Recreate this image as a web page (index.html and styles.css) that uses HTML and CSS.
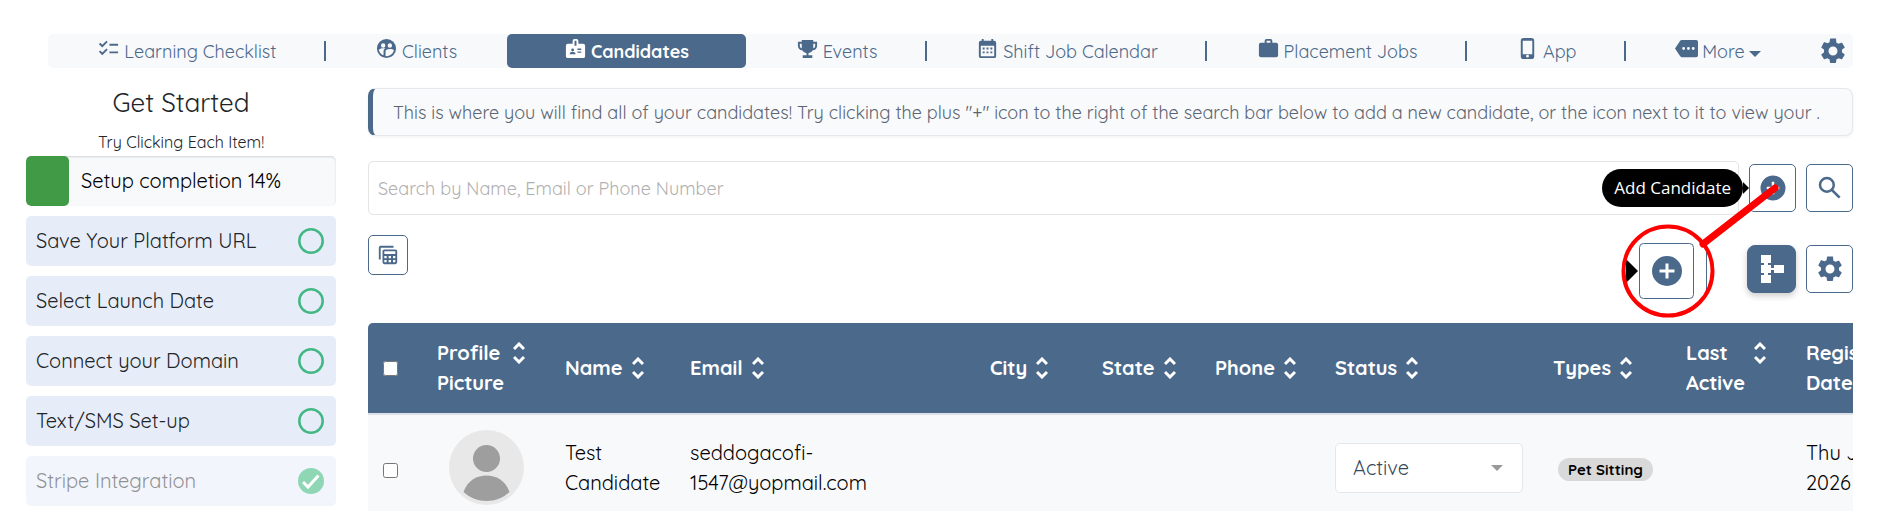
FILE: index.html
```html
<!DOCTYPE html>
<html lang="en">
<head>
  <meta charset="utf-8">
  <title>Candidates</title>
  <link rel="stylesheet" href="styles.css">
</head>
<body>
  <!-- Shared icons -->
  <svg class="sprite" aria-hidden="true">
    <symbol id="gear" viewBox="0 0 24 24"><path d="M19.14 12.94c.04-.3.06-.61.06-.94s-.02-.64-.07-.94l2.03-1.58a.49.49 0 0 0 .12-.61l-1.92-3.32a.49.49 0 0 0-.59-.22l-2.39.96a7 7 0 0 0-1.62-.94l-.36-2.54A.48.48 0 0 0 13.92 2h-3.84c-.24 0-.43.17-.47.41l-.36 2.54c-.59.24-1.13.57-1.62.94l-2.39-.96a.48.48 0 0 0-.59.22L2.74 8.87a.48.48 0 0 0 .12.61l2.03 1.58c-.05.3-.09.63-.09.94s.02.64.07.94l-2.03 1.58a.49.49 0 0 0-.12.61l1.92 3.32c.12.22.37.29.59.22l2.39-.96c.5.38 1.03.7 1.62.94l.36 2.54c.05.24.24.41.48.41h3.84c.24 0 .44-.17.47-.41l.36-2.54c.59-.24 1.13-.56 1.62-.94l2.39.96c.22.08.47 0 .59-.22l1.92-3.32a.48.48 0 0 0-.12-.61zM12 15.6a3.6 3.6 0 1 1 0-7.2 3.6 3.6 0 0 1 0 7.2z"/></symbol>
    <symbol id="plus" viewBox="0 0 24 24"><path d="M12 2a10 10 0 1 0 0 20 10 10 0 0 0 0-20zm5 11h-4v4h-2v-4H7v-2h4V7h2v4h4z"/></symbol>
    <symbol id="sort" viewBox="0 0 12 22"><path d="M1 7 6 2l5 5M1 15l5 5 5-5" fill="none" stroke="currentColor" stroke-width="3"/></symbol>
    <symbol id="ring" viewBox="0 0 26 26"><circle cx="13" cy="13" r="11.700" fill="none" stroke="#41b883" stroke-width="2.500"/></symbol>
  </svg>

  <nav class="navbar">
    <a class="nav-item divided" href="#">
      <svg class="icon" viewBox="0 0 24 24"><path d="M22 7h-9v2h9V7zm0 8h-9v2h9v-2zM5.540 11 2 7.460l1.410-1.410 2.120 2.120 4.240-4.240 1.410 1.410L5.540 11zm0 8L2 15.460l1.410-1.410 2.120 2.120 4.240-4.240 1.410 1.410L5.540 19z"/></svg>
      <span>Learning Checklist</span>
    </a>
    <a class="nav-item" href="#">
      <svg class="icon" viewBox="0 0 24 24"><path fill-rule="evenodd" d="M12 2a10 10 0 1 0 0 20 10 10 0 0 0 0-20zM8.500 6.500a2.300 2.300 0 1 1 0 4.600 2.300 2.300 0 0 1 0-4.600zm7 0a2.300 2.300 0 1 1 0 4.600 2.300 2.300 0 0 1 0-4.600zM4 13.500c.5-1.200 2.500-1.700 4.500-1.700.8 0 1.600.1 2.400.3-1.500.8-2 1.700-2 2.800v4.200A8 8 0 0 1 4 13.500zm7 6.400v-5c0-1.600 2.600-2.500 4.500-2.500 1.700 0 3.700.500 4.300 1.500A8 8 0 0 1 11 19.900z"/></svg>
      <span>Clients</span>
    </a>
    <a class="nav-item active" href="#">
      <svg class="icon" viewBox="0 0 24 24"><path fill-rule="evenodd" d="M20 7h-5V4a2 2 0 0 0-2-2h-2a2 2 0 0 0-2 2v3H4a2 2 0 0 0-2 2v11c0 1.100.9 2 2 2h16a2 2 0 0 0 2-2V9a2 2 0 0 0-2-2zM9 12a1.500 1.500 0 1 1 0 3 1.500 1.500 0 0 1 0-3zm3 6H6v-.750c0-1 2-1.500 3-1.500s3 .500 3 1.500zm1-9h-2V4h2zm5 7.500h-4V15h4zm0-3h-4V12h4z"/></svg>
      <span>Candidates</span>
    </a>
    <a class="nav-item divided" href="#">
      <svg class="icon" viewBox="0 0 24 24"><path fill-rule="evenodd" d="M18 5V3H6v2H2v4c0 2.600 1.900 4.600 4.400 4.900A6 6 0 0 0 11 16.900V19H7v3h10v-3h-4v-2.100a6 6 0 0 0 4.600-3C20.100 13.600 22 11.600 22 9V5zM4 9V7h2v4.800C4.800 11.400 4 10.300 4 9zm16 0c0 1.300-.8 2.400-2 2.800V7h2z"/></svg>
      <span>Events</span>
    </a>
    <a class="nav-item divided" href="#">
      <svg class="icon" viewBox="0 0 24 24"><path fill-rule="evenodd" d="M19 4h-1V2h-2v2H8V2H6v2H5a2 2 0 0 0-2 2v14c0 1.100.9 2 2 2h14a2 2 0 0 0 2-2V6a2 2 0 0 0-2-2zm0 16H5V9h14zM7 11h2v2H7zm4 0h2v2h-2zm4 0h2v2h-2zm-8 4h2v2H7zm4 0h2v2h-2zm4 0h2v2h-2z"/></svg>
      <span>Shift Job Calendar</span>
    </a>
    <a class="nav-item divided" href="#">
      <svg class="icon" viewBox="0 0 24 24"><path fill-rule="evenodd" d="M20 6h-4V4a2 2 0 0 0-2-2h-4a2 2 0 0 0-2 2v2H4a2 2 0 0 0-2 2v11c0 1.100.9 2 2 2h16a2 2 0 0 0 2-2V8a2 2 0 0 0-2-2zm-6 0h-4V4h4z"/></svg>
      <span>Placement Jobs</span>
    </a>
    <a class="nav-item divided" href="#">
      <svg class="icon" viewBox="0 0 24 24"><path fill-rule="evenodd" d="M16 1H8a3 3 0 0 0-3 3v16a3 3 0 0 0 3 3h8a3 3 0 0 0 3-3V4a3 3 0 0 0-3-3zm-4 20.500a1.500 1.500 0 1 1 0-3 1.500 1.500 0 0 1 0 3zM17 18H7V4h10z"/></svg>
      <span>App</span>
    </a>
    <a class="nav-item" href="#">
      <svg class="icon" viewBox="0 0 24 24"><path fill-rule="evenodd" d="M22 3H7c-.7 0-1.200.3-1.600.9L0 12l5.400 8.100c.4.500.9.900 1.600.900h15a2 2 0 0 0 2-2V5a2 2 0 0 0-2-2zM9 13.500a1.500 1.500 0 1 1 0-3 1.500 1.500 0 0 1 0 3zm5 0a1.500 1.500 0 1 1 0-3 1.500 1.500 0 0 1 0 3zm5 0a1.500 1.500 0 1 1 0-3 1.500 1.500 0 0 1 0 3z"/></svg>
      <span>More</span>
      <span class="caret"></span>
    </a>
    <a class="nav-settings" href="#" aria-label="Settings"><svg><use href="#gear"/></svg></a>
  </nav>

  <div class="layout">
    <aside class="sidebar">
      <h2>Get Started</h2>
      <p>Try Clicking Each Item!</p>
      <div class="progress">
        <div class="progress-bar" style="width: 14%"></div>
        <span class="progress-label">Setup completion 14%</span>
      </div>
      <a class="step" href="#">Save Your Platform URL <svg><use href="#ring"/></svg></a>
      <a class="step" href="#">Select Launch Date <svg><use href="#ring"/></svg></a>
      <a class="step" href="#">Connect your Domain <svg><use href="#ring"/></svg></a>
      <a class="step" href="#">Text/SMS Set-up <svg><use href="#ring"/></svg></a>
      <a class="step done" href="#">Stripe Integration
        <svg viewBox="0 0 26 26"><circle cx="13" cy="13" r="13" fill="#1faf6c"/><path d="M5 14l5 5L20.500 7.500" fill="none" stroke="#fff" stroke-width="3"/></svg>
      </a>
    </aside>

    <main class="content">
      <div class="notice">This is where you will find all of your candidates! Try clicking the plus "+" icon to the right of the search bar below to add a new candidate, or the icon next to it to view your .</div>

      <div class="search-row">
        <input class="search" type="text" placeholder="Search by Name, Email or Phone Number" aria-label="Search candidates">
        <div class="add-wrap">
          <button class="icon-btn" type="button" aria-label="Add Candidate"><svg><use href="#plus"/></svg></button>
          <span class="tooltip">Add Candidate</span>
          <!-- Magnified view of the add button -->
          <svg class="callout" viewBox="0 0 160 160" aria-hidden="true">
            <path d="M6 99 18 111 6 123z" fill="#000"/>
            <path d="M86.500 90v42" stroke="#4b698b" stroke-width="1"/>
            <rect x="19.500" y="83.500" width="54" height="55" rx="4" fill="#fff" stroke="#4b698b"/>
            <circle cx="47" cy="111" r="15" fill="#4b698b"/>
            <path d="M39.500 111h15M47 103.500v15" stroke="#fff" stroke-width="3"/>
            <circle cx="48" cy="111" r="44.500" fill="none" stroke="#f00" stroke-width="4"/>
            <path d="M83 84 155 28" stroke="#f00" stroke-width="7" stroke-linecap="round"/>
          </svg>
        </div>
        <button class="icon-btn" type="button" aria-label="Search">
          <svg viewBox="0 0 24 24"><circle cx="9.500" cy="9.500" r="5.500" fill="none" stroke="currentColor" stroke-width="2"/><path d="M13.500 13.500 19.700 19.700" stroke="currentColor" stroke-width="2.200"/></svg>
        </button>
      </div>

      <div class="tool-row">
        <button class="icon-btn small" type="button" aria-label="Table columns">
          <svg viewBox="0 0 24 24"><path fill-rule="evenodd" d="M2 4a2 2 0 0 1 2-2h14v2H4v13H2zM8 6h12a2 2 0 0 1 2 2v12a2 2 0 0 1-2 2H8a2 2 0 0 1-2-2V8c0-1.100.9-2 2-2zm0 2v3h12V8zm0 5v2.500h2.500V13zm4.700 0v2.500h2.600V13zm4.800 0v2.500H20V13zM8 17.500V20h2.500v-2.500zm4.700 0V20h2.600v-2.500zm4.800 0V20H20v-2.500z"/></svg>
        </button>
        <div class="tools">
          <button class="icon-btn primary" type="button" aria-label="Workflow">
            <svg viewBox="0 0 24 28"><path d="M1 0h10v8H8v2h3v3h3v-3h10v8H14v-3h-3v3H8v2h3v8H1v-8h3v-2H1v-8h3V8H1z"/></svg>
          </button>
          <button class="icon-btn" type="button" aria-label="Table settings"><svg><use href="#gear"/></svg></button>
        </div>
      </div>

      <div class="table-wrap">
        <table class="candidates">
          <colgroup>
            <col class="c-check"><col class="c-picture"><col class="c-name"><col class="c-email"><col class="c-city"><col class="c-state"><col class="c-phone"><col class="c-status"><col class="c-types"><col class="c-last"><col class="c-date">
          </colgroup>
          <thead>
            <tr>
              <th><input type="checkbox" aria-label="Select all"></th>
              <th><div class="head"><span>Profile<br>Picture</span><svg><use href="#sort"/></svg></div></th>
              <th><div class="head"><span>Name</span><svg><use href="#sort"/></svg></div></th>
              <th><div class="head"><span>Email</span><svg><use href="#sort"/></svg></div></th>
              <th><div class="head"><span>City</span><svg><use href="#sort"/></svg></div></th>
              <th><div class="head"><span>State</span><svg><use href="#sort"/></svg></div></th>
              <th><div class="head"><span>Phone</span><svg><use href="#sort"/></svg></div></th>
              <th><div class="head"><span>Status</span><svg><use href="#sort"/></svg></div></th>
              <th><div class="head"><span>Types</span><svg><use href="#sort"/></svg></div></th>
              <th><div class="head"><span>Last<br>Active</span><svg><use href="#sort"/></svg></div></th>
              <th><div class="head"><span>Registration<br>Date</span></div></th>
            </tr>
          </thead>
          <tbody>
            <tr>
              <td><input type="checkbox" aria-label="Select Test Candidate"></td>
              <td class="picture">
                <svg viewBox="0 0 75 75"><circle cx="37.500" cy="37.500" r="37.500" fill="#e8e8e8"/><circle cx="37.500" cy="28.500" r="13.500" fill="#9e9e9e"/><path d="M14.500 62C19 50 28 45.500 37.500 45.500S56 50 60.500 62C54 68 46 71 37.500 71S21 68 14.500 62z" fill="#9e9e9e"/></svg>
              </td>
              <td>Test Candidate</td>
              <td>seddogacofi-<br>1547@yopmail.com</td>
              <td></td>
              <td></td>
              <td></td>
              <td>
                <div class="select-wrap">
                  <select aria-label="Status"><option>Active</option><option>Inactive</option></select>
                </div>
              </td>
              <td><span class="badge">Pet Sitting</span></td>
              <td></td>
              <td>Thu Jan 15 2026</td>
            </tr>
          </tbody>
        </table>
      </div>
    </main>
  </div>
</body>
</html>
```
FILE: styles.css
```css
* {
  box-sizing: border-box;
}

body {
  margin: 0;
  height: 100vh;
  overflow: hidden;
  padding: 34px 48px 0 26px;
  background: #fff;
  color: #212529;
  font-family: Quicksand, Lato, sans-serif;
  font-size: 20px;
  line-height: 30px;
}

a {
  color: inherit;
  text-decoration: none;
}

svg {
  fill: currentColor;
  flex: none;
}

button,
input,
select {
  font-family: inherit;
}

.sprite {
  display: none;
}

/* Navigation */
.navbar {
  display: flex;
  height: 34px;
  margin-left: 22px;
  background: #f8f9fb;
  border-radius: 5px;
  color: #4b698b;
  font-size: 18px;
}

.nav-item {
  display: flex;
  flex: 1 1 auto;
  align-items: center;
  justify-content: center;
  gap: 4px;
  position: relative;
  padding-top: 2px;
}

.nav-item.divided::after {
  content: "";
  position: absolute;
  right: 0;
  top: 7px;
  height: 20px;
  border-right: 2px solid #4b698b;
}

.nav-item.active {
  padding: 2px 8px 0;
  background: #4b698b;
  border-radius: 5px;
  color: #fff;
  font-weight: bold;
}

.nav-item .icon {
  width: 23px;
  height: 23px;
  margin-bottom: 7px;
}

.caret {
  border: 6px solid transparent;
  border-top-color: #4b698b;
  border-bottom: 0;
  margin-top: 4px;
}

.nav-settings {
  display: flex;
  align-items: center;
  padding: 0 5px 0 8px;
}

.nav-settings svg {
  width: 30px;
  height: 30px;
}

/* Page columns */
.layout {
  display: grid;
  grid-template-columns: 310px minmax(0, 1fr);
  gap: 32px;
}

/* Get started steps */
.sidebar {
  display: flex;
  flex-direction: column;
  gap: 10px;
  padding-top: 20px;
}

.sidebar h2 {
  margin: 0;
  text-align: center;
  font-size: 26px;
  font-weight: normal;
}

.sidebar p {
  margin: 0 0 -10px;
  text-align: center;
  font-size: 16px;
  line-height: 28px;
}

.progress {
  display: grid;
  height: 50px;
  overflow: hidden;
  background: #f8f9fb;
  border-radius: 5px;
  box-shadow: inset 0 1px 2px rgba(0, 0, 0, 0.15);
  color: #000;
}

.progress-bar,
.progress-label {
  grid-area: 1 / 1;
}

.progress-bar {
  background: #419a45;
  border-radius: 5px;
}

.progress-label {
  place-self: center;
}

.step {
  display: flex;
  align-items: center;
  justify-content: space-between;
  height: 50px;
  padding: 0 12px 0 10px;
  background: #e7edf8;
  border-radius: 5px;
}

.step svg {
  width: 26px;
  height: 26px;
}

.step.done {
  opacity: 0.5;
}

/* Main column */
.content {
  padding-top: 20px;
}

.notice {
  padding: 9px 20px 7px;
  background: #f9fafc;
  border: 1px solid #e5e7eb;
  border-left: 5px solid #4b698b;
  border-radius: 8px;
  box-shadow: 0 1px 3px rgba(0, 0, 0, 0.06);
  color: #5b6472;
  font-size: 18px;
}

.search-row {
  display: flex;
  align-items: center;
  gap: 10px;
  margin-top: 25px;
}

.search {
  flex: 1;
  min-width: 0;
  height: 54px;
  padding: 0 9px;
  border: 1px solid #e4e4e4;
  border-radius: 5px;
  font-size: 18px;
}

.search::placeholder {
  color: #b0b0b0;
}

.icon-btn {
  display: flex;
  align-items: center;
  justify-content: center;
  width: 47px;
  height: 48px;
  padding: 0;
  background: #fff;
  border: 1px solid #4b698b;
  border-radius: 5px;
  color: #4b698b;
}

.icon-btn svg {
  width: 30px;
  height: 30px;
}

.icon-btn.small {
  width: 40px;
  height: 40px;
}

.icon-btn.small svg {
  width: 22px;
  height: 22px;
}

.icon-btn.primary {
  width: 49px;
  background: #4b698b;
  border-radius: 8px;
  box-shadow: 0 3px 6px rgba(0, 0, 0, 0.2);
  color: #fff;
}

.icon-btn.primary svg {
  width: 24px;
  height: 28px;
}

.add-wrap {
  position: relative;
}

.tooltip {
  position: absolute;
  top: 5px;
  right: 53px;
  padding: 0 12px;
  background: #000;
  border-radius: 20px;
  color: #fff;
  font-family: "Open Sans", sans-serif;
  font-size: 17px;
  line-height: 38px;
  white-space: nowrap;
}

.tooltip::after {
  content: "";
  position: absolute;
  left: 100%;
  top: 13px;
  border: 6px solid transparent;
  border-left-color: #000;
  border-right: 0;
}

.callout {
  position: absolute;
  left: -129px;
  top: -4px;
  width: 160px;
  height: 160px;
  pointer-events: none;
}

.tool-row {
  display: flex;
  align-items: flex-start;
  justify-content: space-between;
  margin-top: 20px;
}

.tools {
  display: flex;
  gap: 10px;
  padding-top: 10px;
}

/* Candidates table */
.table-wrap {
  margin-top: 30px;
  overflow: hidden;
  border-radius: 5px 0 0 0;
}

.candidates {
  width: 1560px;
  table-layout: fixed;
  border-collapse: collapse;
  color: #000;
}

.c-check { width: 54px; }
.c-picture { width: 128px; }
.c-name { width: 125px; }
.c-email { width: 300px; }
.c-city { width: 112px; }
.c-state { width: 113px; }
.c-phone { width: 120px; }
.c-status { width: 218px; }
.c-types { width: 133px; }
.c-last { width: 120px; }

.candidates th,
.candidates td {
  padding: 15px;
  text-align: left;
  vertical-align: middle;
}

.candidates th {
  background: #4b698b;
  border-bottom: 2px solid #dee2e6;
  color: #fff;
}

.candidates td {
  height: 105px;
  background: #f8f9fb;
}

.head {
  display: flex;
  gap: 9px;
}

.head svg {
  width: 12px;
  height: 22px;
  margin-top: 4px;
}

.candidates input {
  display: block;
  width: 15px;
  height: 15px;
  margin: 0;
}

.candidates td input {
  margin-top: 5px;
}

.picture svg {
  display: block;
  width: 75px;
  height: 75px;
  margin: 0 auto;
}

.select-wrap {
  position: relative;
}

.select-wrap::after {
  content: "";
  position: absolute;
  right: 20px;
  top: 22px;
  border: 6px solid transparent;
  border-top-color: #999;
  border-bottom: 0;
}

.select-wrap select {
  display: block;
  width: 100%;
  height: 50px;
  padding: 0 17px;
  appearance: none;
  background: #fff;
  border: 1px solid #e5e7eb;
  border-radius: 5px;
  color: #34495e;
  font-size: 20px;
}

.badge {
  display: inline-block;
  margin-left: 5px;
  padding: 0 10px;
  background: #d9d9d9;
  border-radius: 12px;
  font-size: 15px;
  font-weight: bold;
  line-height: 23px;
  white-space: nowrap;
}
```
